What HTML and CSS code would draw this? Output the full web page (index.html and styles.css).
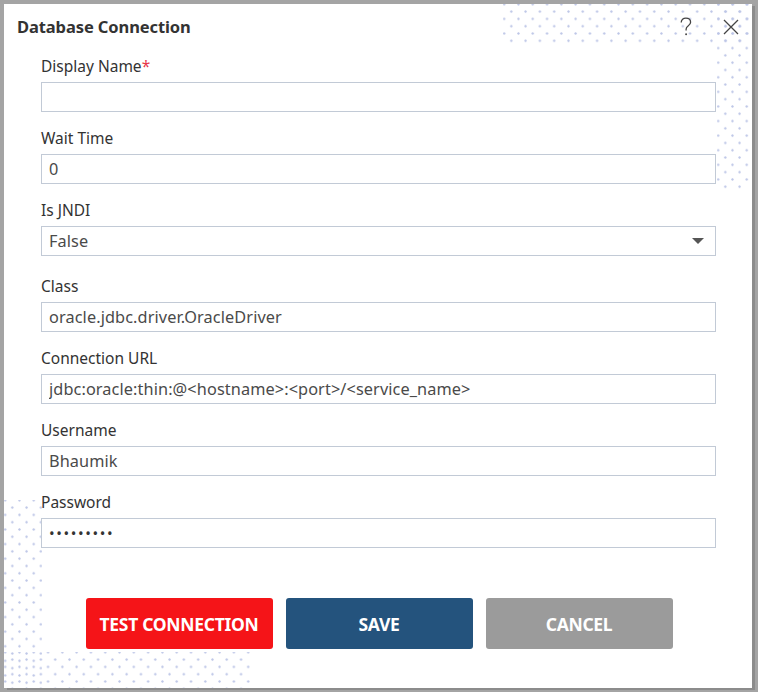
FILE: index.html
```html
<!DOCTYPE html>
<html lang="en">
<head>
<meta charset="utf-8">
<title>Database Connection</title>
<link rel="stylesheet" href="styles.css">
</head>
<body>
<div class="dialog">
  <div class="decor decor-top"></div>
  <div class="decor decor-right"></div>
  <div class="decor decor-left"></div>
  <div class="decor decor-bottom"></div>

  <header class="dialog-header">
    <h1 class="dialog-title">Database Connection</h1>
    <div class="header-actions">
      <button class="icon-btn" aria-label="Help">
        <svg width="14" height="20" viewBox="0 0 14 20"><path d="M2.2 5.6 C2.2 2.8 4.3 1.2 6.9 1.2 C9.6 1.2 11.6 2.9 11.6 5.3 C11.6 7.2 10.4 8.1 9.1 9 C7.8 9.9 7.1 10.6 7.1 12.3 V13.6" fill="none" stroke="#444" stroke-width="1.3"/><circle cx="7.1" cy="17.2" r="0.95" fill="#444"/></svg>
      </button>
      <button class="icon-btn" aria-label="Close">
        <svg width="16" height="16" viewBox="0 0 16 16"><path d="M1 1 L15 15 M15 1 L1 15" stroke="#444" stroke-width="1.3" fill="none"/></svg>
      </button>
    </div>
  </header>

  <form class="form">
    <div class="field">
      <label class="label">Display Name<span class="req">*</span></label>
      <input class="input" type="text" value="">
    </div>
    <div class="field">
      <label class="label">Wait Time</label>
      <input class="input" type="text" value="0">
    </div>
    <div class="field field-select">
      <label class="label">Is JNDI</label>
      <div class="select-wrap">
        <select class="input select">
          <option>False</option>
          <option>True</option>
        </select>
        <span class="caret"></span>
      </div>
    </div>
    <div class="field">
      <label class="label">Class</label>
      <input class="input" type="text" value="oracle.jdbc.driver.OracleDriver">
    </div>
    <div class="field">
      <label class="label">Connection URL</label>
      <input class="input" type="text" value="jdbc:oracle:thin:@<hostname>:<port>/<service_name>">
    </div>
    <div class="field">
      <label class="label">Username</label>
      <input class="input" type="text" value="Bhaumik">
    </div>
    <div class="field">
      <label class="label">Password</label>
      <div class="input password">•••••••••</div>
    </div>

    <div class="actions">
      <button type="button" class="btn btn-test">TEST CONNECTION</button>
      <button type="button" class="btn btn-save">SAVE</button>
      <button type="button" class="btn btn-cancel">CANCEL</button>
    </div>
  </form>
</div>
</body>
</html>
```

FILE: styles.css
```css
html, body {
  margin: 0;
  padding: 0;
}
body {
  width: 758px;
  height: 692px;
  background: #a4a4a4;
  font-family: "Noto Sans", "Open Sans", sans-serif;
  overflow: hidden;
}
.dialog {
  position: relative;
  margin: 4px 0 0 4px;
  width: 748px;
  height: 684px;
  background: #fff;
  box-shadow: 3px 2px 0 #8c8c8c;
  box-sizing: border-box;
}
.decor {
  position: absolute;
  z-index: 0;
  background-image:
    radial-gradient(circle, #bcc5e6 0.8px, rgba(188,197,230,0) 1.5px),
    radial-gradient(circle, #bcc5e6 0.8px, rgba(188,197,230,0) 1.5px);
  background-size: 14.3px 14.6px;
  background-position: -6px -7px, 1.15px 0.3px;
}
.decor-top { left: 499px; top: 0; width: 249px; height: 42px; }
.decor-right { left: 713px; top: 0; width: 35px; height: 188px; }
.decor-left { left: 0; top: 496px; width: 38px; height: 188px; }
.decor-bottom { left: 0; top: 648px; width: 249px; height: 36px; }

.dialog-header {
  position: relative;
  z-index: 1;
  display: flex;
  align-items: center;
  justify-content: space-between;
  padding: 11px 13px 0 13px;
  height: 24px;
}
.dialog-title {
  margin: 0;
  font-size: 16.5px;
  line-height: 24px;
  font-weight: 700;
  color: #333;
  letter-spacing: -0.1px;
}
.header-actions {
  display: flex;
  align-items: center;
  gap: 30px;
}
.icon-btn {
  border: 0;
  background: none;
  padding: 0;
  display: flex;
  align-items: center;
  justify-content: center;
}
.form {
  position: relative;
  z-index: 1;
  padding: 16px 36px 0 37px;
  margin: 0;
}
.field {
  display: flex;
  flex-direction: column;
  gap: 4px;
  margin-bottom: 15px;
}
.field-select {
  margin-bottom: 19px;
}
.label {
  font-size: 15.5px;
  line-height: 23px;
  color: #333;
}
.req {
  color: #e8374a;
}
.input {
  box-sizing: border-box;
  width: 675px;
  height: 30px;
  margin: 0;
  border: 1px solid #c2cad6;
  border-radius: 0;
  background: #fff;
  padding: 0 7px;
  font-family: "Noto Sans", "Open Sans", sans-serif;
  font-size: 16.3px;
  letter-spacing: 0.1px;
  color: #4a4a4a;
  outline: none;
}
.select-wrap {
  position: relative;
  width: 675px;
}
.select {
  -webkit-appearance: none;
  appearance: none;
  display: block;
}
.caret {
  position: absolute;
  right: 12px;
  top: 12px;
  width: 0;
  height: 0;
  border-left: 6px solid transparent;
  border-right: 6px solid transparent;
  border-top: 6px solid #555;
}
.password {
  display: flex;
  align-items: center;
  font-size: 15px;
  letter-spacing: 1.6px;
  color: #333;
}
.actions {
  display: flex;
  justify-content: center;
  gap: 13px;
  margin-top: 50px;
  margin-right: -1px;
}
.btn {
  width: 187px;
  height: 51px;
  border: 0;
  border-radius: 3px;
  color: #fff;
  font-family: "Noto Sans", "Open Sans", sans-serif;
  font-size: 17.5px;
  font-weight: 700;
  letter-spacing: -0.3px;
  padding: 0;
}
.btn-test { background: #f51418; }
.btn-save { background: #24537d; }
.btn-cancel { background: #9b9b9b; }
```
